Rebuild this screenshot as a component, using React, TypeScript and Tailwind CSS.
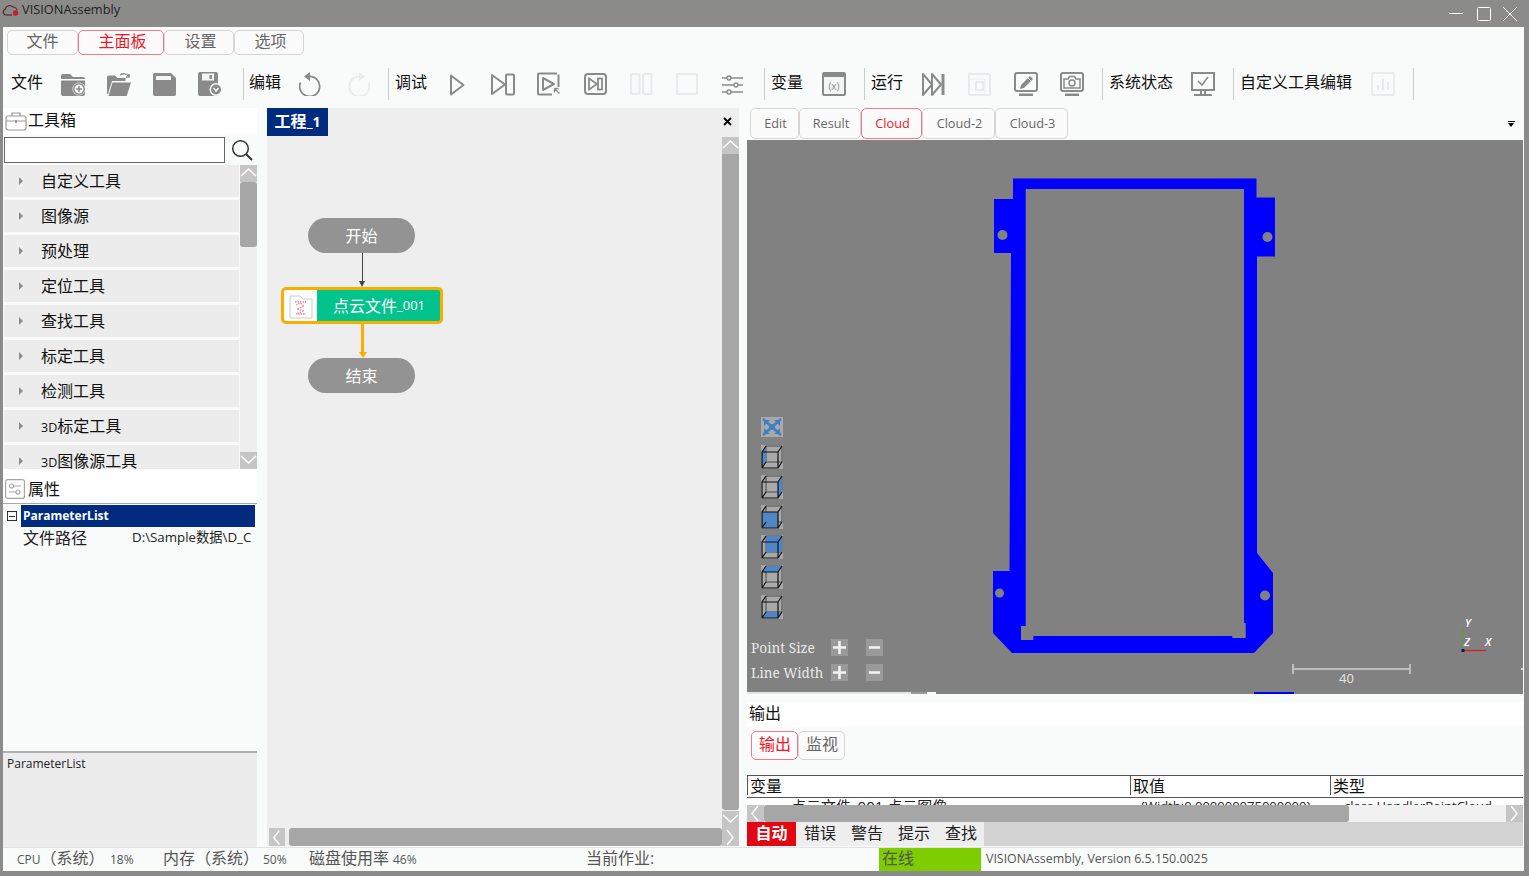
import type { ReactNode } from "react";

const G = "#8a8a8a";
const L = "#e8eaee";

function Ico({ children, w = 24, h = 24 }: { children: ReactNode; w?: number; h?: number }) {
    return (
        <svg width={w} height={h} viewBox={`0 0 ${w} ${h}`} fill="none" className="block shrink-0">
            {children}
        </svg>
    );
}

function FolderPlus() {
    return (
        <Ico w={26}>
            <path d="M1 4a2 2 0 0 1 2-2h7l3 3h10a2 2 0 0 1 2 2v15a2 2 0 0 1-2 2H3a2 2 0 0 1-2-2z" fill={G} />
            <rect x="1" y="7" width="24" height="1.5" fill="#f9fbfa" />
            <circle cx="19" cy="17" r="6.5" fill="#f9fbfa" />
            <circle cx="19" cy="17" r="5.2" stroke={G} strokeWidth="1.5" />
            <path d="M19 14v6M16 17h6" stroke={G} strokeWidth="1.5" />
        </Ico>
    );
}

function FolderOpen() {
    return (
        <Ico>
            <path d="M0 5a1.500 1.500 0 0 1 1.500-1.500H8l2.500 2.500h8v3H5L1 22H0z" fill={G} />
            <path d="M5.500 10.500H24l-4 12.500a1 1 0 0 1-1 1H1.500z" fill={G} />
            <path d="M13 3c3-2 7-1.500 9 1.500M22 2v3h-3" stroke={G} strokeWidth="1.500" />
        </Ico>
    );
}

function Save() {
    return (
        <Ico>
            <path d="M3 1h16l5 5v16a2 2 0 0 1-2 2H3a2 2 0 0 1-2-2V3a2 2 0 0 1 2-2z" fill={G} />
            <rect x="4" y="4" width="15" height="4" fill="#f4f5f5" />
        </Ico>
    );
}

function SaveAs() {
    return (
        <Ico w={26}>
            <path d="M3 0h16a2 2 0 0 1 2 2v20a2 2 0 0 1-2 2H3a2 2 0 0 1-2-2V2a2 2 0 0 1 2-2z" fill={G} />
            <rect x="5" y="1.500" width="12" height="7" fill="#f4f5f5" />
            <rect x="12.500" y="3" width="2.500" height="4" fill={G} />
            <circle cx="19" cy="17.500" r="6.500" fill="#f9fbfa" />
            <circle cx="19" cy="17.500" r="5" fill={G} />
            <path d="M16.500 16l2.500 3 2.500-3" stroke="#f9fbfa" strokeWidth="1.500" />
        </Ico>
    );
}

function Undo({ color = G, flip = false }: { color?: string; flip?: boolean }) {
    return (
        <Ico>
            <g transform={flip ? "translate(24 0) scale(-1 1)" : undefined}>
                <path d="M10 4.500a10 10 0 1 1-8.500 6" stroke={color} strokeWidth="1.800" />
                <path d="M11 0v9L5 4.500z" fill={color} />
            </g>
        </Ico>
    );
}

function Play() {
    return (
        <Ico>
            <path d="M6 3.500v19L18.500 13z" stroke={G} strokeWidth="2" strokeLinejoin="round" />
        </Ico>
    );
}

function StepPlay() {
    return (
        <Ico>
            <path d="M1 3v19l13-9.500z" stroke={G} strokeWidth="2" strokeLinejoin="round" />
            <rect x="15" y="2.500" width="8" height="20" rx="1" stroke={G} strokeWidth="2" />
        </Ico>
    );
}

function PlayCursor() {
    return (
        <Ico>
            <path d="M20 1.500H2a1 1 0 0 0-1 1v19a1 1 0 0 0 1 1h13M21.500 15V2.500" stroke={G} strokeWidth="2" />
            <path d="M6 6v12l11-6z" stroke={G} strokeWidth="2" strokeLinejoin="round" />
            <path d="M17.500 16.500h4M17.500 16.500v4M17.500 16.500l5 5" stroke={G} strokeWidth="1.300" />
        </Ico>
    );
}

function BoxStep() {
    return (
        <Ico>
            <rect x="1" y="2" width="21" height="20" rx="3" stroke={G} strokeWidth="2" />
            <path d="M5 6.500v11l8-5.500z" stroke={G} strokeWidth="1.800" />
            <rect x="14" y="6.500" width="4" height="11" stroke={G} strokeWidth="1.800" />
        </Ico>
    );
}

function Pause() {
    return (
        <Ico>
            <rect x="1" y="2" width="8.500" height="20" rx="1" stroke={L} strokeWidth="2" />
            <rect x="13" y="2" width="8.500" height="20" rx="1" stroke={L} strokeWidth="2" />
        </Ico>
    );
}

function Stop() {
    return (
        <Ico>
            <rect x="1" y="2" width="20" height="20" rx="1" stroke={L} strokeWidth="2" />
        </Ico>
    );
}

function Sliders() {
    return (
        <Ico>
            <path d="M1 6h21M1 13h21M1 20h21" stroke={G} strokeWidth="1.500" />
            <circle cx="8" cy="6" r="2" fill="#f9fbfa" stroke={G} strokeWidth="1.300" />
            <circle cx="15" cy="13" r="2" fill="#f9fbfa" stroke={G} strokeWidth="1.300" />
            <circle cx="8" cy="20" r="2" fill="#f9fbfa" stroke={G} strokeWidth="1.300" />
        </Ico>
    );
}

function Variable() {
    return (
        <Ico>
            <rect x="1" y="1" width="22" height="22" rx="1" fill="#f4f5f5" stroke={G} strokeWidth="2" />
            <rect x="1" y="1" width="22" height="4" fill={G} />
            <text x="12" y="18" textAnchor="middle" fontSize="10" fill={G} fontFamily="Open Sans, sans-serif">(x)</text>
        </Ico>
    );
}

function RunAll() {
    return (
        <Ico>
            <path d="M1 2v21l9-10.500z" stroke={G} strokeWidth="2" strokeLinejoin="round" />
            <path d="M10 2v21l9-10.500z" stroke={G} strokeWidth="2" strokeLinejoin="round" />
            <path d="M21 2v21" stroke={G} strokeWidth="3" />
        </Ico>
    );
}

function ScreenBox() {
    return (
        <Ico>
            <path d="M1 2h20a1 1 0 0 1 1 1v20H2a1 1 0 0 1-1-1z" stroke={L} strokeWidth="2" />
            <path d="M1 7h16v16" stroke={L} strokeWidth="1" />
            <rect x="8" y="10" width="7" height="8" stroke={L} strokeWidth="2" />
        </Ico>
    );
}

function Monitor({ children }: { children: ReactNode }) {
    return (
        <Ico>
            <rect x="1" y="1" width="22" height="18" rx="2" stroke={G} strokeWidth="2" />
            <rect x="5" y="21.500" width="14" height="2.500" fill={G} />
            {children}
        </Ico>
    );
}

function MonitorPen() {
    return (
        <Monitor>
            <path d="M16 4l3 3-9 9-4 1 1-4z" fill={G} />
            <path d="M14 6l3 3" stroke="#f9fbfa" strokeWidth="1" />
        </Monitor>
    );
}

function MonitorCamera() {
    return (
        <Monitor>
            <path d="M4 7h4l1.500-2.500h5L16 7h4v9H4z" stroke={G} strokeWidth="1.500" />
            <circle cx="12" cy="11" r="3" stroke={G} strokeWidth="1.500" />
        </Monitor>
    );
}

function MonitorCheck() {
    return (
        <Ico>
            <rect x="1" y="1" width="22" height="17" stroke={G} strokeWidth="2" />
            <path d="M7 9l4 4 6-8" stroke={G} strokeWidth="1.500" />
            <path d="M10 19v3M14 19v3" stroke={G} strokeWidth="2" />
            <rect x="3" y="22" width="18" height="2" fill={G} />
        </Ico>
    );
}

function ChartBox() {
    return (
        <Ico>
            <rect x="1" y="1" width="22" height="22" rx="1" stroke={L} strokeWidth="2" />
            <path d="M7 18v-5M12 18V7M17 18v-8" stroke={L} strokeWidth="2" />
        </Ico>
    );
}

function Group({ label, width, children, border = true, icons = "ml-[18px] gap-[22px]" }: {
    label: string;
    width: string;
    children?: ReactNode;
    border?: boolean;
    icons?: string;
}) {
    return (
        <div className={`flex h-[32px] shrink-0 items-center pl-[6px] ${width} ${border ? "border-l border-[#cdcdcd]" : ""}`}>
            <span className="mb-[4px] whitespace-nowrap text-[16px] text-[#111]">{label}</span>
            <div className={`flex items-center ${icons}`}>{children}</div>
        </div>
    );
}

function Tab({ label, active, w, h = "h-[25px] pb-[3px]", text = "text-[16px]" }: { label: string; active?: boolean; w: string; h?: string; text?: string }) {
    return (
        <div
            className={`flex shrink-0 items-center justify-center rounded-[5px] border bg-[#fbfbfb] ${w} ${h} ${text} ${
                active ? "border-[#ef7a90] text-[#f5141e]" : "border-[#d5d5d5] text-[#666]"
            }`}
        >
            {label}
        </div>
    );
}

function Chevron({ dir }: { dir: "up" | "down" | "left" | "right" }) {
    const d = {
        up: "M1 11L8.500 4l7.500 7",
        down: "M1 4l7.500 7 7.500-7",
        left: "M11 1L5 8.500l6 7.500",
        right: "M5 1l6 7.500-6 7.500",
    }[dir];
    return (
        <svg width="17" height="17" viewBox="0 0 17 17" fill="none" className="block">
            <path d={d} stroke="#fff" strokeWidth="1.500" />
        </svg>
    );
}

function ScrollBtn({ dir }: { dir: "up" | "down" | "left" | "right" }) {
    return (
        <div className="flex h-[17px] w-[17px] shrink-0 items-center justify-center bg-[#c5c5c5]">
            <Chevron dir={dir} />
        </div>
    );
}

function ToolRow({ label }: { label: ReactNode }) {
    return (
        <div className="flex h-[32px] shrink-0 items-center bg-[#ececec]">
            <span className="ml-[15px] h-0 w-0 border-y-[4px] border-l-[4px] border-y-transparent border-l-[#8c8c8c]" />
            <span className="ml-[18px] text-[16px] leading-none text-[#111]">{label}</span>
        </div>
    );
}

function CubeIcon({ face }: { face: string }) {
    return (
        <svg width="22" height="24" viewBox="0 0 22 24" className="block">
            <rect width="22" height="24" fill="#a9a9a9" />
            <path d="M5 1h16v16H5z" fill="none" stroke="#4a4a4a" strokeWidth="1" />
            <path d={face} fill="#4f86c6" />
            <path d="M1 7h16v16H1zM1 7l4-6M17 7l4-6M1 23l4-6M17 23l4-6" fill="none" stroke="#111" strokeWidth="1.200" />
        </svg>
    );
}

function ViewButton({ glyph }: { glyph: "plus" | "minus" }) {
    return (
        <div className="flex h-[17px] w-[17px] items-center justify-center bg-[#9a9a9a]">
            <svg width="13" height="13" viewBox="0 0 13 13">
                <path d={glyph === "plus" ? "M0 6.500h13M6.500 0v13" : "M1 6.500h11"} stroke="#f4f4f4" strokeWidth="2.500" />
            </svg>
        </div>
    );
}

const cubes = [
    "M1 7l4-6v16l-4 6z",
    "M17 7l4-6v16l-4 6z",
    "M1 7h16v16H1z",
    "M5 1h16v16H5z",
    "M1 7l4-6h16l-4 6z",
    "M1 23l4-6h16l-4 6z",
];

export default function App() {
    return (
        <div className="flex h-[876px] w-[1529px] flex-col overflow-hidden bg-[#8b8b89] font-['Open_Sans','Noto_Sans_CJK_SC',sans-serif]">
            {/* Title bar */}
            <div className="flex h-[27px] shrink-0 items-center">
                <svg width="18" height="12" viewBox="0 0 18 12" fill="none" className="ml-[2px] mt-[-8px] block">
                    <path d="M4 11a3 3 0 0 1-.8-5.800C4 1.500 8.500.500 11 3c2.500.2 3.800 1.500 4 3.500" stroke="#5a2a30" strokeWidth="1.200" />
                    <path d="M4 11h6" stroke="#5a2a30" strokeWidth="1.200" />
                    <circle cx="13.500" cy="9" r="2.800" fill="#c8202c" />
                </svg>
                <span className="ml-[2px] mt-[-8px] text-[12.800px] text-[#222]">VISIONAssembly</span>
                <div className="ml-auto mr-[12px] flex items-center">
                    <svg width="14" height="14" viewBox="0 0 14 14"><path d="M0 6.500h14" stroke="#fff" strokeWidth="1" /></svg>
                    <svg width="14" height="14" viewBox="0 0 14 14" className="ml-[14px]"><rect x="0.500" y="0.500" width="13" height="13" rx="1" fill="none" stroke="#fff" strokeWidth="1" /></svg>
                    <svg width="14" height="14" viewBox="0 0 14 14" className="ml-[12px]"><path d="M0 0l14 14M14 0L0 14" stroke="#fff" strokeWidth="1" /></svg>
                </div>
            </div>

            <div className="mb-[5px] ml-[3px] mr-[5px] flex min-h-0 flex-1 flex-col bg-[#f9fbfa]">
                {/* Ribbon tabs */}
                <div className="flex h-[28px] shrink-0 items-start pl-[4px] pt-[3px]">
                    <Tab label="文件" w="w-[71px]" />
                    <Tab label="主面板" w="w-[86px] pl-[3px]" active />
                    <Tab label="设置" w="w-[70px] pl-[3px]" />
                    <Tab label="选项" w="w-[70px] pl-[3px]" />
                </div>

                {/* Toolbar */}
                <div className="flex h-[53px] shrink-0 items-center pt-[5px]">
                    <Group label="文件" width="w-[240px] !pl-[8px]" border={false} icons="ml-[17px] gap-[21px]">
                        <FolderPlus />
                        <FolderOpen />
                        <Save />
                        <SaveAs />
                    </Group>
                    <Group label="编辑" width="w-[145px] !pl-[5px]" icons="ml-[18px] gap-[23px]">
                        <Undo />
                        <Undo color={L} flip />
                    </Group>
                    <Group label="调试" width="w-[376px]" icons="ml-[18px] gap-[22px]">
                        <Play />
                        <StepPlay />
                        <PlayCursor />
                        <div className="ml-[1px]"><BoxStep /></div>
                        <Pause />
                        <Stop />
                        <div className="ml-[-1px]"><Sliders /></div>
                    </Group>
                    <Group label="变量" width="w-[100px]" icons="ml-[19px]">
                        <Variable />
                    </Group>
                    <Group label="运行" width="w-[238px]" icons="ml-[19px] gap-[22px]">
                        <RunAll />
                        <ScreenBox />
                        <MonitorPen />
                        <MonitorCamera />
                    </Group>
                    <Group label="系统状态" width="w-[131px]">
                        <MonitorCheck />
                    </Group>
                    <Group label="自定义工具编辑" width="w-[181px] border-r" icons="ml-[19px]">
                        <ChartBox />
                    </Group>
                </div>

                {/* Body */}
                <div className="flex min-h-0 flex-1">
                    {/* Left column */}
                    <div className="flex w-[254px] shrink-0 flex-col">
                        <div className="flex h-[27px] shrink-0 items-center bg-white pb-[2px] pl-[2px]">
                            <svg width="22" height="20" viewBox="0 0 22 20" fill="none" className="block">
                                <rect x="1" y="5" width="20" height="14" rx="2" stroke="#9a9a9a" strokeWidth="1.200" />
                                <path d="M7 5V2h8v3M1 10h20" stroke="#9a9a9a" strokeWidth="1.200" />
                                <rect x="10" y="9" width="2" height="3" fill="#9a9a9a" />
                            </svg>
                            <span className="mb-[2px] ml-[1px] text-[16px] text-[#111]">工具箱</span>
                        </div>
                        <div className="flex h-[30px] shrink-0 items-start pl-[1px] pt-[2px]">
                            <div className="h-[26px] w-[221px] border border-[#666] bg-white" />
                            <svg width="22" height="22" viewBox="0 0 22 22" fill="none" className="ml-[6px] mt-[2px] block">
                                <circle cx="9.500" cy="9.500" r="7.800" stroke="#333" strokeWidth="1.500" />
                                <path d="M15 15l6 6" stroke="#333" strokeWidth="2" />
                            </svg>
                        </div>
                        <div className="flex h-[304px] shrink-0 overflow-hidden">
                            <div className="ml-[1px] flex w-[235px] flex-col gap-[3px] overflow-hidden">
                                <ToolRow label="自定义工具" />
                                <ToolRow label="图像源" />
                                <ToolRow label="预处理" />
                                <ToolRow label="定位工具" />
                                <ToolRow label="查找工具" />
                                <ToolRow label="标定工具" />
                                <ToolRow label="检测工具" />
                                <ToolRow label={<><span className="text-[12.500px]">3D</span>标定工具</>} />
                                <ToolRow label={<><span className="text-[12.500px]">3D</span>图像源工具</>} />
                            </div>
                            <div className="ml-[1px] flex w-[17px] flex-col bg-[#eeeeee]">
                                <ScrollBtn dir="up" />
                                <div className="h-[65px] rounded-[3px] bg-[#a6a6a6]" />
                                <div className="flex-1" />
                                <ScrollBtn dir="down" />
                            </div>
                        </div>
                        <div className="flex h-[35px] shrink-0 items-center border-b border-[#a8a8a8] bg-white pl-[2px] pt-[6px]">
                            <svg width="20" height="20" viewBox="0 0 20 20" fill="none" className="block">
                                <rect x="0.600" y="0.600" width="18.800" height="18.800" rx="2" stroke="#a5a5a5" strokeWidth="1.200" />
                                <circle cx="6.500" cy="7" r="2" stroke="#a5a5a5" strokeWidth="1.200" />
                                <circle cx="13" cy="13" r="2" stroke="#a5a5a5" strokeWidth="1.200" />
                                <path d="M8.500 7H16M4 13h7" stroke="#a5a5a5" strokeWidth="1.200" />
                            </svg>
                            <span className="ml-[3px] text-[16px] text-[#111]">属性</span>
                        </div>
                        <div className="min-h-0 flex-1 overflow-hidden bg-[#f9fbfa]">
                            <div className="mt-[1px] flex h-[22px] items-center">
                                <div className="ml-[4px] flex h-[10px] w-[10px] items-center justify-center border border-[#333]">
                                    <div className="h-[1px] w-[6px] bg-[#333]" />
                                </div>
                                <div className="ml-[4px] flex h-[22px] w-[234px] items-center bg-[#002b7f] pl-[2px] text-[12px] font-bold text-white">
                                    ParameterList
                                </div>
                            </div>
                            <div className="flex h-[22px] items-center">
                                <span className="ml-[20px] w-[109px] shrink-0 text-[16px] text-[#222]">文件路径</span>
                                <span className="w-[121px] overflow-hidden whitespace-nowrap text-[13.300px] text-[#222]">D:\Sample数据\D_C</span>
                            </div>
                        </div>
                        <div className="h-[96px] shrink-0 border-t-2 border-[#b0b0b0] bg-[#ececec] pl-[4px] pt-[2px] text-[12px] text-[#222]">
                            ParameterList
                        </div>
                    </div>

                    {/* Flow canvas */}
                    <div className="relative ml-[10px] mb-[1px] flex w-[472px] shrink-0 flex-col bg-[#eeeeee]">
                        <div className="flex h-[28px] w-[61px] shrink-0 items-center justify-center bg-[#002b7f] pb-[2px] text-[16px] font-bold text-white">
                            工程<span className="text-[14px]">_1</span>
                        </div>
                        <svg width="9" height="9" viewBox="0 0 9 9" className="absolute right-[7px] top-[9px] block">
                            <path d="M1 1l7 7M8 1L1 8" stroke="#000" strokeWidth="1.800" />
                        </svg>
                        <div className="flex min-h-0 flex-1">
                            <div className="relative min-w-0 flex-1">
                                {/* nodes sit on a free canvas */}
                                <div className="absolute left-[41px] top-[82px] flex h-[35px] w-[107px] items-center justify-center rounded-full bg-[#939393] text-[16px] text-white">开始</div>
                                <div className="absolute left-[95px] top-[117px] h-[29px] w-[1px] bg-[#444]" />
                                <div className="absolute left-[92px] top-[145px] h-0 w-0 border-x-[3.500px] border-t-[6px] border-x-transparent border-t-[#444]" />
                                <div className="absolute left-[14px] top-[151px] flex h-[37px] w-[162px] overflow-hidden rounded-[5px] border-[3px] border-[#f9ae00] bg-[#02c38c]">
                                    <div className="flex w-[33px] shrink-0 items-center justify-center bg-[#fbfefd]">
                                        <svg width="24" height="26" viewBox="0 0 24 26" fill="none" className="block">
                                            <path d="M1 3h10l3 3h9v19H1z" stroke="#cfcfcf" strokeWidth="1" />
                                            <path d="M6 9h11M7 12l4-2 4 3-7 3 7 2-8 3h10" stroke="#ec8aa0" strokeWidth="1.300" strokeDasharray="1.500 1" />
                                        </svg>
                                    </div>
                                    <div className="flex flex-1 items-center justify-center pl-[1px] pt-[1px] text-[16px] text-white">
                                        点云文件<span className="text-[13px]">_001</span>
                                    </div>
                                </div>
                                <div className="absolute left-[94px] top-[188px] h-[28px] w-[3px] bg-[#f9ae00]" />
                                <div className="absolute left-[91.500px] top-[216px] h-0 w-0 border-x-[4px] border-t-[6px] border-x-transparent border-t-[#f9ae00]" />
                                <div className="absolute left-[41px] top-[222px] flex h-[35px] w-[107px] items-center justify-center rounded-full bg-[#939393] text-[16px] text-white">结束</div>
                            </div>
                            <div className="flex w-[17px] shrink-0 flex-col bg-[#eeeeee] pt-[1px]">
                                <ScrollBtn dir="up" />
                                <div className="min-h-0 flex-1 rounded-b-[3px] bg-[#a6a6a6]" />
                                <div className="h-[1px]" />
                                <ScrollBtn dir="down" />
                            </div>
                        </div>
                        <div className="flex h-[18px] shrink-0 items-center">
                            <div className="ml-[2px] flex h-[18px] w-[16px] items-center justify-center bg-[#c5c5c5]"><Chevron dir="left" /></div>
                            <div className="ml-[4px] h-[18px] flex-1 rounded-[3px] bg-[#a6a6a6]" />
                            <div className="flex h-[18px] w-[17px] items-center justify-center bg-[#c5c5c5]"><Chevron dir="right" /></div>
                        </div>
                    </div>

                    {/* Right column */}
                    <div className="ml-[8px] flex w-[776px] shrink-0 flex-col">
                        <div className="relative flex h-[32px] shrink-0 items-start pl-[3px]">
                            <Tab label="Edit" w="w-[49px] pl-[2px] pt-[1px]" h="h-[31px]" text="text-[12.700px]" />
                            <Tab label="Result" w="w-[62px] pl-[2px] pt-[1px]" h="h-[31px]" text="text-[12.700px]" />
                            <Tab label="Cloud" w="w-[61px] pl-[2px] pt-[1px]" h="h-[31px]" text="text-[12.700px]" active />
                            <Tab label="Cloud-2" w="w-[73px] pl-[2px] pt-[1px]" h="h-[31px]" text="text-[12.700px]" />
                            <Tab label="Cloud-3" w="w-[73px] pl-[2px] pt-[1px]" h="h-[31px]" text="text-[12.700px]" />
                            <div className="absolute left-[761px] top-[13px] h-[1px] w-[7px] bg-black" />
                            <div className="absolute left-[761px] top-[15px] h-0 w-0 border-x-[3.500px] border-t-[4px] border-x-transparent border-t-black" />
                        </div>

                        {/* 3D viewer */}
                        <div className="relative h-[554px] shrink-0 overflow-hidden bg-[#808180]">
                            <svg width="776" height="554" viewBox="747 140 776 554" className="absolute left-0 top-0 block">
                                <path
                                    fillRule="evenodd"
                                    fill="#0000ff"
                                    d="M1013 178.500H1256.500V197.500H1275V256.500H1257V553L1273 573V633L1254 653H1012L993 633V571H1009.500L1011 253H994V199H1013zM1025.700 189V626H1021V640H1033.300V636H1232.300V638H1245.700V623H1244V189z"
                                />
                                <circle cx="1002.500" cy="235" r="5" fill="#808180" />
                                <circle cx="1267.500" cy="237" r="5" fill="#808180" />
                                <circle cx="999.500" cy="593" r="4.500" fill="#808180" />
                                <circle cx="1265" cy="595.500" r="5" fill="#808180" />
                                <path d="M1293 669H1410M1293 664v10M1410 664v10" stroke="#cfcfcf" strokeWidth="1.500" fill="none" />
                                <path d="M1463 650V628" stroke="#5aa02c" strokeWidth="1.200" />
                                <path d="M1463 650.500H1486" stroke="#e8141c" strokeWidth="1.200" />
                                <rect x="1461.500" y="649" width="3" height="3" fill="#101060" />
                                <rect x="1521" y="668" width="2" height="2" fill="#d8d8d8" />
                                <rect x="747" y="692" width="164" height="2" fill="#e4e4e4" />
                                <rect x="911" y="692" width="16" height="2" fill="#9a9a9a" />
                                <rect x="927" y="692" width="9" height="2" fill="#fbfbfb" />
                                <rect x="1254" y="692" width="40" height="2" fill="#0000ff" />
                            </svg>
                            <div className="absolute left-[14px] top-[277px] flex flex-col gap-[6px]">
                                <svg width="22" height="20" viewBox="0 0 22 20" className="block">
                                    <rect width="22" height="20" fill="#a9a9a9" />
                                    <path d="M2 2l18 16M20 2L2 18" stroke="#3f7fc4" strokeWidth="2.500" />
                                    <path d="M3 3h6L3 9zM19 3h-6l6 6zM3 17h6l-6-6zM19 17h-6l6-6z" fill="#3f7fc4" />
                                    <circle cx="11" cy="10" r="3" fill="#3f7fc4" />
                                </svg>
                                <div className="mt-[2px] flex flex-col gap-[6px]">
                                    {cubes.map((c) => (
                                        <CubeIcon key={c} face={c} />
                                    ))}
                                </div>
                            </div>
                            <div className="absolute left-[4px] top-[499px] flex h-[17px] items-center font-['Noto_Serif','DejaVu_Serif','Liberation_Serif',serif] text-[13.700px] text-[#e8e8e8]">
                                <span className="mt-[1px] w-[80px] whitespace-nowrap">Point Size</span>
                                <ViewButton glyph="plus" />
                                <div className="w-[18px]" />
                                <ViewButton glyph="minus" />
                            </div>
                            <div className="absolute left-[4px] top-[524px] flex h-[17px] items-center font-['Noto_Serif','DejaVu_Serif','Liberation_Serif',serif] text-[13.500px] text-[#e8e8e8]">
                                <span className="mt-[1px] w-[80px] whitespace-nowrap">Line Width</span>
                                <ViewButton glyph="plus" />
                                <div className="w-[18px]" />
                                <ViewButton glyph="minus" />
                            </div>
                            <span className="absolute left-[592px] top-[529px] text-[13px] leading-[18px] text-[#e6e6e6]">40</span>
                            <span className="absolute left-[718px] top-[477px] text-[11px] font-semibold italic leading-[12px] text-white">Y</span>
                            <span className="absolute left-[717px] top-[496px] text-[11px] font-semibold italic leading-[12px] text-white">Z</span>
                            <span className="absolute left-[738px] top-[496px] text-[11px] font-semibold italic leading-[12px] text-white">X</span>
                        </div>

                        <div className="h-[8px] shrink-0" />
                        <div className="flex h-[25px] shrink-0 items-center bg-white pb-[3px] pl-[2px] text-[16px] text-[#111]">输出</div>
                        <div className="flex h-[48px] shrink-0 items-start pl-[4px] pt-[4px]">
                            <Tab label="输出" w="w-[47px] pl-[1px]" h="h-[29px] pb-[3px]" active />
                            <Tab label="监视" w="w-[47px] pl-[1px]" h="h-[29px] pb-[3px]" />
                        </div>

                        {/* Output table */}
                        <div className="flex h-[23px] shrink-0 border-y border-[#555] bg-white pb-[2px] text-[16px] leading-none text-[#111]">
                            <div className="flex w-[384px] items-center border-x border-[#555] pl-[2px]">变量</div>
                            <div className="flex w-[200px] items-center border-r border-[#555] pl-[2px]">取值</div>
                            <div className="flex flex-1 items-center pl-[2px]">类型</div>
                        </div>
                        <div className="flex h-[7px] shrink-0 overflow-hidden whitespace-nowrap bg-white text-[13px] leading-[16px] text-[#222]">
                            <span className="ml-[44px] w-[349px] text-[15px] leading-[16px]">点云文件_001.点云图像</span>
                            <span className="w-[204px]">{"{Width:0.000000075000000}"}</span>
                            <span>class HandlerPointCloud</span>
                        </div>
                        <div className="flex h-[17px] shrink-0 items-center bg-[#f1f1f1]">
                            <ScrollBtn dir="left" />
                            <div className="h-[17px] w-[585px] rounded-[3px] bg-[#a6a6a6]" />
                            <div className="flex-1" />
                            <ScrollBtn dir="right" />
                        </div>
                        <div className="flex h-[24px] shrink-0 items-center bg-[#d2d2d2] text-[16px] text-[#222]">
                            <div className="flex h-full w-[49px] items-center justify-center bg-[#e30613] pb-[3px] font-bold text-white">自动</div>
                            <div className="flex h-full w-[188px] items-center gap-[15px] bg-[#eeeeee] pb-[3px] pl-[8px]">
                                <span>错误</span>
                                <span>警告</span>
                                <span>提示</span>
                                <span>查找</span>
                            </div>
                        </div>
                        <div className="h-[1px] shrink-0" />
                    </div>
                </div>

                {/* Status bar */}
                <div className="flex h-[24px] shrink-0 items-center border-t border-[#e2e2e2] text-[#555]">
                    <span className="mb-[3px] ml-[14px] w-[93px] whitespace-nowrap text-[16px]"><span className="text-[12px]">CPU</span>（系统）</span>
                    <span className="w-[53px] text-[12px]">18%</span>
                    <span className="mb-[3px] w-[100px] whitespace-nowrap text-[16px]">内存（系统）</span>
                    <span className="w-[46px] text-[12px]">50%</span>
                    <span className="mb-[3px] w-[84px] whitespace-nowrap text-[16px]">磁盘使用率</span>
                    <span className="w-[193px] text-[12px]">46%</span>
                    <span className="mb-[3px] w-[293px] whitespace-nowrap text-[16px]">当前作业:</span>
                    <div className="flex h-full w-[102px] items-center bg-[#7dcd00] pb-[3px] pl-[3px] text-[16px]">在线</div>
                    <span className="ml-[5px] whitespace-nowrap text-[12.400px]">VISIONAssembly, Version 6.5.150.0025</span>
                </div>
            </div>
        </div>
    );
}
